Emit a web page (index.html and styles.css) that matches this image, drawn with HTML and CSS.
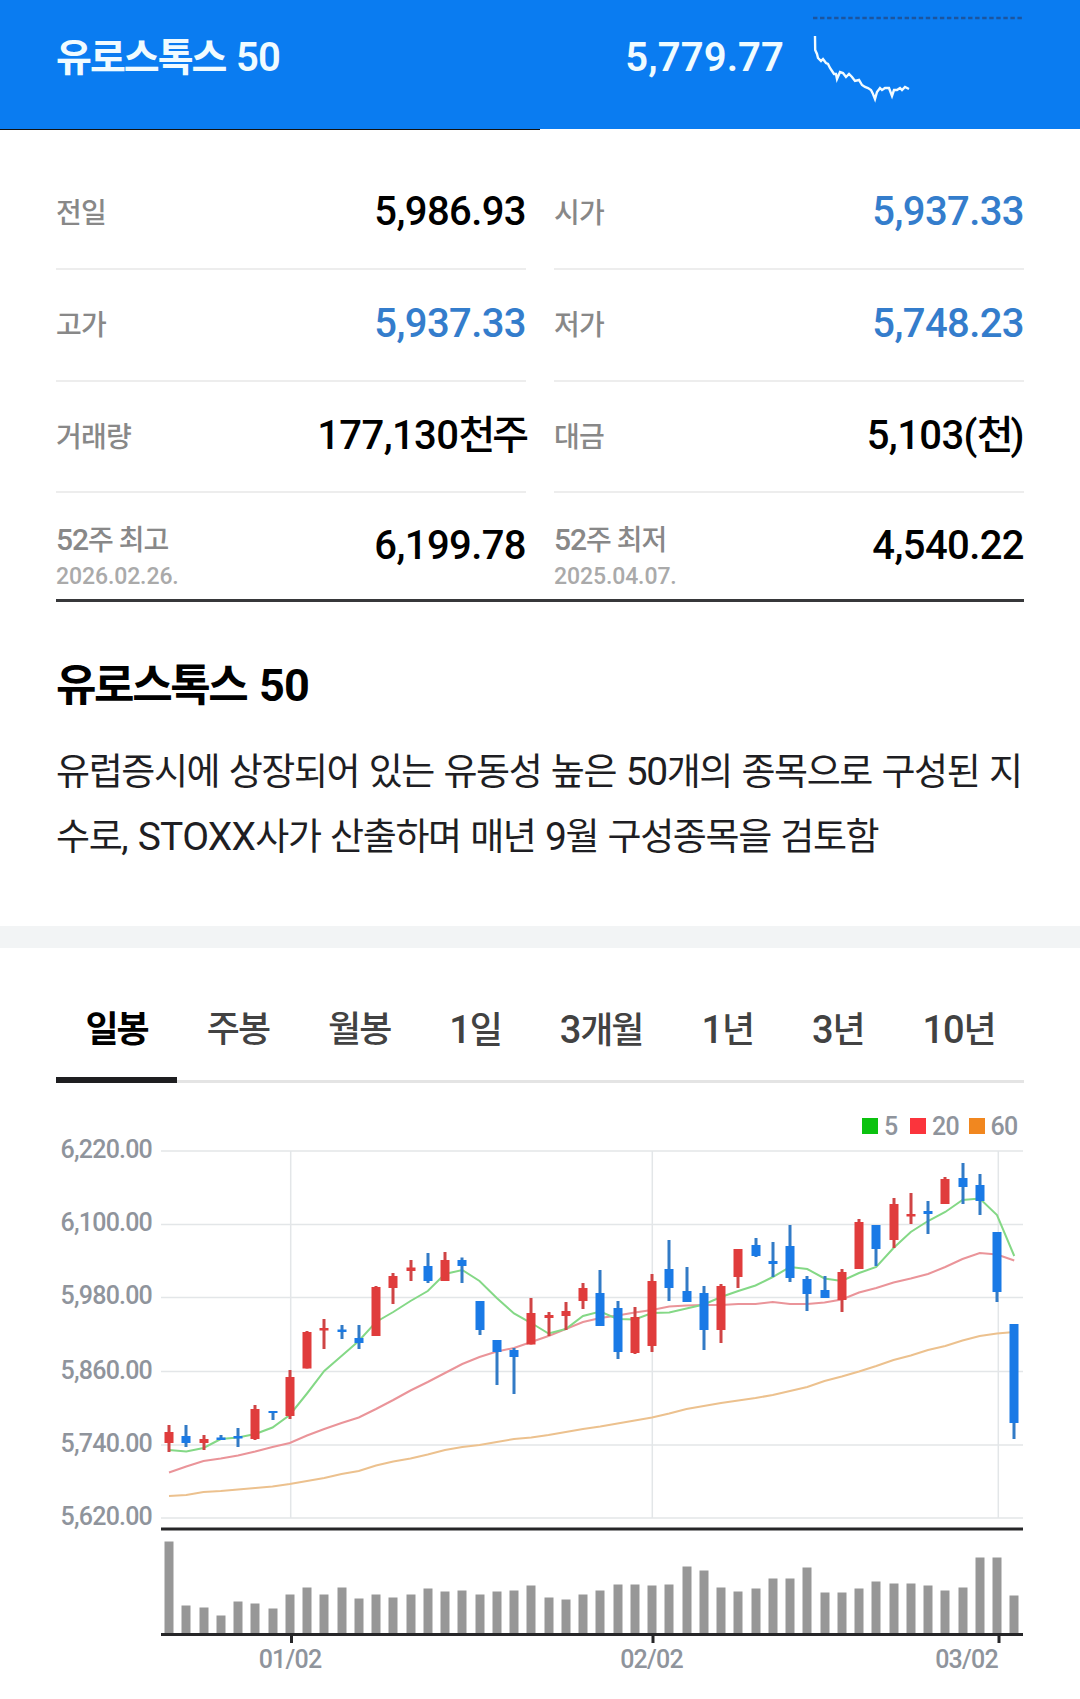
FILE: index.html
```
<!DOCTYPE html>
<html lang="ko">
<head>
    <meta charset="UTF-8">
    <meta name="viewport" content="width=device-width, initial-scale=1.0">
    <title>유로스톡스 50</title>
    <link rel="stylesheet" href="styles.css">
</head>
<body>
    <header class="header">
        <h1>유로스톡스 <span class="num">50</span></h1>
        <span class="price">5,779.77</span>
        <svg class="spark" width="212" height="129" viewBox="812 0 212 129">
            <line x1="813" y1="18" x2="1022" y2="18" stroke="#1c559f" stroke-width="2.4" stroke-dasharray="4.4 2.65"/>
            <polyline fill="none" stroke="#f2fbff" stroke-width="2.4" points="815,36 815.2,50 817,54 818,58 821,61 823,59 826,63 828,64 830,68 834,74 836,74 837,79 840,72 843,73 846,77 849,74 852,77 855,81 859,80 862,85 865,87 868,88 871,90 873,94 875,99 877,92 880,88 882,90 885,88 889,88 892,96 894,90 897,90 900,88 902,90 905,87 909,89"/>
        </svg>
    </header>

    <section class="info">
        <div class="cell"><span class="label">전일</span><span class="value">5,986.93</span></div>
        <div class="cell"><span class="label">시가</span><span class="value down">5,937.33</span></div>
        <div class="cell"><span class="label">고가</span><span class="value down">5,937.33</span></div>
        <div class="cell"><span class="label">저가</span><span class="value down">5,748.23</span></div>
        <div class="cell"><span class="label">거래량</span><span class="value">177,130<span class="unit">천주</span></span></div>
        <div class="cell"><span class="label">대금</span><span class="value">5,103(<span class="unit">천</span>)</span></div>
        <div class="cell last"><span class="label"><span class="num">52</span>주 최고<small>2026.02.26.</small></span><span class="value">6,199.78</span></div>
        <div class="cell last"><span class="label"><span class="num">52</span>주 최저<small>2025.04.07.</small></span><span class="value">4,540.22</span></div>
    </section>

    <section class="about">
        <h2>유로스톡스 <span class="num">50</span></h2>
        <p>유럽증시에 상장되어 있는 유동성 높은 <span class="num">50</span>개의 종목으로 구성된 지<br>수로, <span class="num name">STOXX</span>사가 산출하며 매년 <span class="num">9</span>월 구성종목을 검토함</p>
    </section>

    <nav class="tabs">
        <a class="tab active">일봉</a>
        <a class="tab">주봉</a>
        <a class="tab">월봉</a>
        <a class="tab"><span class="num">1</span>일</a>
        <a class="tab"><span class="num">3</span>개월</a>
        <a class="tab"><span class="num">1</span>년</a>
        <a class="tab"><span class="num">3</span>년</a>
        <a class="tab"><span class="num">10</span>년</a>
    </nav>

    <svg class="chart" id="chart" width="1080" height="599" viewBox="0 0 1080 599">
        <!-- Legend -->
        <rect x="862" y="18" width="16" height="16" fill="#0bc20f"/>
        <text x="884" y="35">5</text>
        <rect x="910" y="18" width="16" height="16" fill="#fb343c"/>
        <text x="932" y="35">20</text>
        <rect x="969" y="18" width="16" height="16" fill="#f1871f"/>
        <text x="990.5" y="35">60</text>

        <!-- Grid -->
        <path class="grid" d="M161 51H1023M161 124.5H1023M161 197.5H1023M161 271.5H1023M161 345H1023M161 418H1023M290.7 51V418M652.3 51V418M998.3 51V418"/>
        <g text-anchor="end">
            <text x="152" y="57.5">6,220.00</text>
            <text x="152" y="130.5">6,100.00</text>
            <text x="152" y="204">5,980.00</text>
            <text x="152" y="278.5">5,860.00</text>
            <text x="152" y="351.5">5,740.00</text>
            <text x="152" y="424.5">5,620.00</text>
        </g>

        <g id="series"></g>

        <!-- Axes -->
        <path class="axis" d="M161 429H1023M161 534.5H1023M291.5 534V543M653 534V543M999 534V543"/>
        <g text-anchor="middle">
            <text x="290" y="568">01/02</text>
            <text x="651.5" y="568">02/02</text>
            <text x="966.5" y="568">03/02</text>
        </g>
    </svg>

    <script src="chart.js"></script>
</body>
</html>
```

FILE: styles.css
```
body {
    margin: 0;
    background: #fff;
    color: #000;
    font-family: Roboto, "Noto Sans CJK KR", sans-serif;
}

.header {
    display: flex;
    align-items: flex-start;
    box-sizing: border-box;
    height: 130px;
    padding: 0 56px;
    background:
        linear-gradient(#111, #111) left bottom / 540px 1px no-repeat,
        linear-gradient(#0a7cf1, #0a7cf1) left top / 100% 129px no-repeat;
    color: #f0fbff;
    margin-bottom: 28px;
}

.header h1 {
    flex: 1;
    margin: 28px 0 0;
    font-size: 39px;
    font-weight: 700;
    letter-spacing: -2px;
    line-height: 60px;
    word-spacing: 3px;
}

.header .num {
    font-size: 40px;
    font-weight: 600;
    letter-spacing: -1px;
}

.price {
    margin: 28px 28px 0 0;
    font-size: 40px;
    font-weight: 600;
    letter-spacing: 0.1px;
    line-height: 60px;
}

.info {
    display: grid;
    grid-template-columns: 1fr 1fr;
    grid-template-rows: 112px 112px 111px 106px;
    column-gap: 28px;
    margin: 0 56px;
    border-bottom: 3px solid #37383a;
}

.cell {
    display: flex;
    justify-content: space-between;
    align-items: center;
    border-bottom: 2px solid #ededed;
}

.cell.last {
    align-items: flex-start;
    padding-top: 26px;
    border-bottom: 0;
}

.label {
    padding-top: 2px;
    color: #888;
    font-size: 28px;
    font-weight: 500;
    letter-spacing: -0.8px;
    line-height: 42px;
}

.last .label {
    padding-top: 0;
    letter-spacing: -1px;
}

.label .num {
    font-size: 30px;
    letter-spacing: -1px;
}

.label small {
    display: block;
    color: #aaa;
    font-size: 23px;
    letter-spacing: -0.1px;
    line-height: 29px;
}

.value {
    padding-bottom: 2px;
    font-size: 40px;
    font-weight: 500;
    letter-spacing: -0.6px;
    line-height: 54px;
}

.unit {
    letter-spacing: -3px;
}

.down {
    color: #347dcc;
}

.about {
    padding: 49px 56px 56px;
    border-bottom: 22px solid #f2f4f5;
}

.about h2 {
    margin: 0 0 19px;
    font-size: 44px;
    font-weight: 700;
    letter-spacing: -2.4px;
    line-height: 69px;
    word-spacing: 4px;
}

.about h2 .num {
    font-size: 45px;
    letter-spacing: -0.8px;
}

.about p {
    margin: 0;
    color: #1e1e23;
    font-size: 37px;
    letter-spacing: -1.4px;
    line-height: 65px;
    white-space: nowrap;
    word-spacing: 1.7px;
}

.about p .num {
    font-size: 39px;
}

.about p .name {
    margin-left: 1px;
    letter-spacing: -0.7px;
}

.tabs {
    display: flex;
    height: 135px;
    margin: 0 56px;
    box-shadow: inset 0 -3px #e4e4e4;
}

.tab {
    flex: 1 1 auto;
    box-sizing: border-box;
    padding-top: 52px;
    color: #424242;
    font-size: 36px;
    font-weight: 500;
    letter-spacing: -2px;
    line-height: 60px;
    text-align: center;
}

.tab .num {
    font-size: 38px;
    letter-spacing: -1.2px;
}

.tab.active {
    color: #000;
    font-weight: 700;
    border-bottom: 6px solid #1e1e20;
}

.chart {
    display: block;
    margin-top: 17px;
}

.chart text {
    fill: #8f949c;
    font-size: 25px;
    font-weight: 500;
    letter-spacing: -0.8px;
}

.grid {
    fill: none;
    stroke: #e3e6e8;
    stroke-width: 1.5;
}

.axis {
    fill: none;
    stroke: #262628;
    stroke-width: 3;
}
```

FILE: chart.js
```
const UP = '#e03c3c';
const DOWN = '#1a7ae6';

// [color, high, body top, body bottom, low] in chart pixels
const candles = [
    ['u', 325, 332, 343, 352], ['d', 325, 336, 343, 347], ['u', 335, 339, 343, 350], ['d', 335, 337.5, 340, 340], ['d', 328, 336, 338.5, 347],
    ['u', 305, 309, 339, 340], ['d', 311, 311, 313, 320], ['u', 270, 277, 316, 319], ['u', 231, 232, 268.5, 268.5], ['u', 219, 228, 230.5, 249],
    ['d', 225, 229.5, 232, 239], ['d', 225, 238, 243, 249], ['u', 186, 187, 236, 236], ['u', 173, 176, 188, 204], ['u', 160, 167.5, 171, 181],
    ['d', 153, 166, 181, 183], ['u', 152, 160, 181, 181], ['d', 157.5, 160, 166, 183], ['d', 201, 201, 230, 235], ['d', 240, 240, 252, 285],
    ['d', 248, 250, 257, 294], ['u', 198, 213, 244.5, 244.5], ['u', 212, 215, 218, 236], ['u', 202, 211, 216, 230], ['u', 183, 188, 201, 209],
    ['d', 170, 193, 226, 226], ['d', 201, 208, 252, 259], ['u', 207, 217, 253, 254], ['u', 174, 181, 246, 252], ['d', 140, 169, 188, 201],
    ['d', 167, 191, 202, 202], ['d', 186, 193, 230, 250], ['u', 184, 186, 230, 243], ['u', 149, 149, 177, 188], ['d', 138, 145, 156, 157],
    ['d', 142, 161, 164, 177], ['d', 125, 146, 178, 182], ['d', 176, 179, 194, 211], ['d', 176, 190, 198, 198], ['u', 169, 172, 200, 212],
    ['u', 119, 122, 169, 169], ['d', 125, 125, 149, 166], ['u', 98, 104, 140, 148], ['u', 93, 114, 116.5, 124], ['d', 101, 111, 114, 134],
    ['u', 77, 79, 104, 104], ['d', 63, 78, 87, 104], ['d', 74, 85, 101, 115], ['d', 132, 132, 192, 202], ['d', 224, 224, 323, 339]
];

const volumes = [
    92, 28, 26, 18, 32, 30, 25, 39, 46, 39, 46, 35, 39, 36, 39, 45, 42, 43, 39, 42, 43, 48, 36, 34, 39,
    43, 49, 49, 48, 49, 67, 63, 46, 42, 45, 55, 55, 66, 41, 41, 45, 52, 50, 50, 48, 43, 46, 76, 76, 38
];

const ma5 = [350, 351.5, 348, 339, 337.5, 334, 327.5, 315, 293.5, 271, 256, 241, 222, 212, 201, 191, 174, 170, 181, 198, 213.5, 223, 233.5, 229, 216, 211.5, 219, 219.5, 213, 212.5, 208.5, 204.5, 197, 191, 185.5, 177, 167, 169, 178.5, 181, 173, 167, 148, 132, 121, 112, 100, 98.5, 115, 156];
const ma20 = [372.5, 366.5, 361, 358.5, 355.5, 351.5, 347, 343, 335.5, 329, 323, 317.5, 309, 300, 290.5, 282, 273, 264, 257, 251.5, 248, 242, 236, 229, 222, 218, 215.5, 212.5, 210, 206.5, 205.5, 205, 205, 204, 204, 202, 204, 204, 202.5, 199.5, 192.5, 188, 182.5, 178.5, 174, 167, 159, 153, 154.5, 160.5];
const ma60 = [396, 395, 392, 391, 389.5, 388, 386.5, 384, 381, 378, 374, 371, 365.5, 361.5, 358.5, 354.5, 350, 347, 345, 342, 339, 337.5, 335, 332, 329, 326.5, 323.5, 320.5, 317.5, 313.5, 309, 306, 303, 300.5, 298, 295, 291, 287, 281, 276.5, 271.5, 266, 260, 255.5, 250, 246, 240.5, 236, 233.5, 232];

const px = i => 169 + i * 17.25;

function line(values, color) {
    const points = values.map((y, i) => `${px(i)},${y}`).join(' ');
    return `<polyline points="${points}" fill="none" stroke="${color}" stroke-width="2"/>`;
}

let out = line(ma60, '#ecc18e') + line(ma20, '#ea9499') + line(ma5, '#84d886');

candles.forEach(([dir, high, top, bottom, low], i) => {
    const color = dir === 'u' ? UP : DOWN;
    const wick = dir === 'u' ? '#cf4445' : '#327bc6';
    const x = Math.round(px(i));
    out += `<rect x="${x - 1.5}" y="${high}" width="3" height="${low - high}" fill="${wick}"/>`;
    out += `<rect x="${x - 4.5}" y="${top}" width="9" height="${bottom - top}" fill="${color}"/>`;
});

volumes.forEach((v, i) => {
    out += `<rect x="${Math.round(px(i)) - 4.5}" y="${533.5 - v}" width="9" height="${v}" fill="#979797"/>`;
});

document.getElementById('series').innerHTML = out;
```
